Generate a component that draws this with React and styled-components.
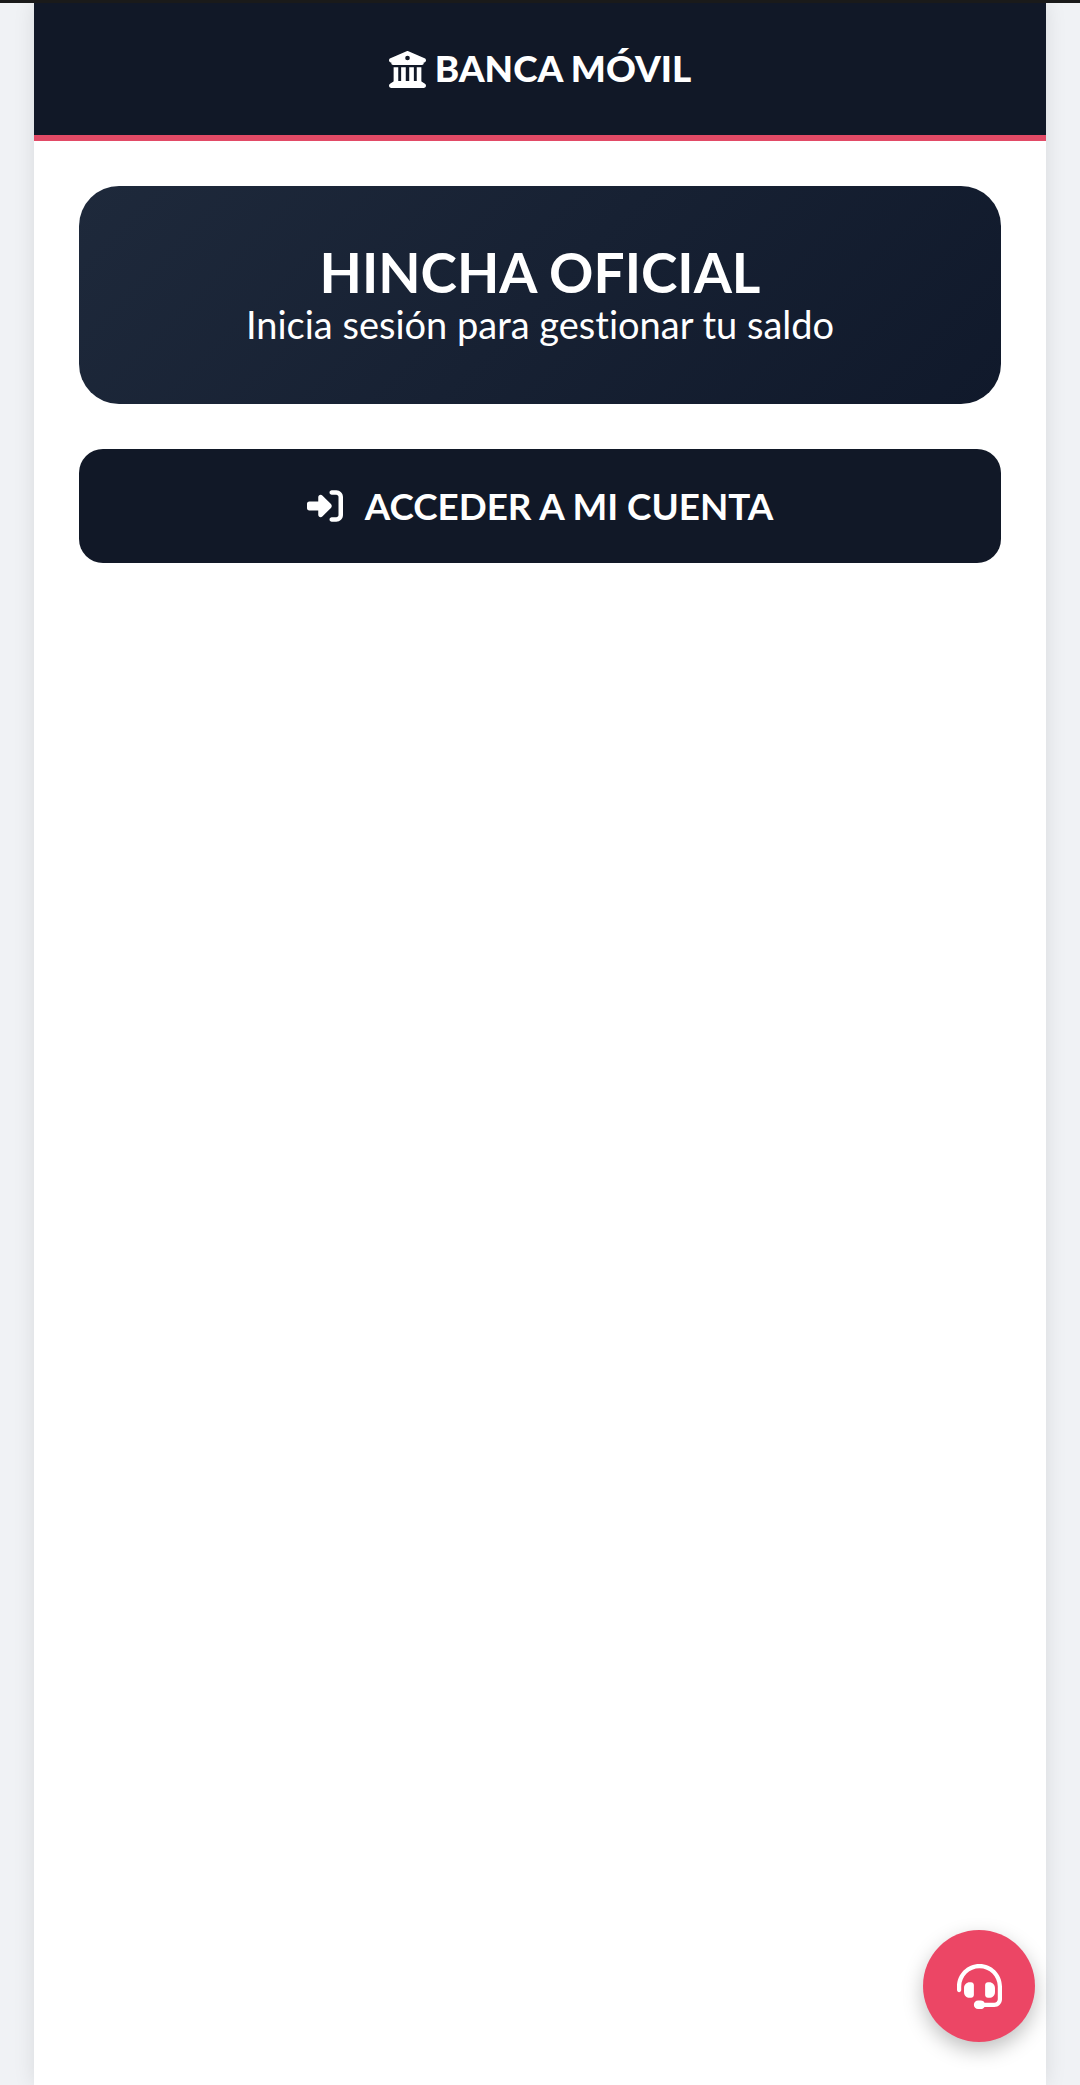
import React from "react";
import styled, { createGlobalStyle } from "styled-components";
import { FaBuildingColumns, FaRightToBracket, FaHeadset } from "react-icons/fa6";

const Global = createGlobalStyle`
  html, body { margin: 0; padding: 0; background: #f0f2f5; }
  body {
    font-family: "Lato", "Liberation Sans", sans-serif;
    font-variant-ligatures: none;
  }
`;

const Page = styled.div`
  min-height: 2085px;
  border-top: 3px solid #1a1a1a;
  box-sizing: border-box;
  overflow: hidden;
`;

const Shell = styled.main`
  width: 1012px;
  min-height: 2082px;
  margin: 0 auto;
  background: #fff;
  box-shadow: 0 0 20px rgba(0, 0, 0, 0.1);
`;

const Header = styled.header`
  height: 132px;
  box-sizing: content-box;
  background: #111827;
  border-bottom: 6px solid #e24a66;
  display: flex;
  align-items: center;
  justify-content: center;
  gap: 9px;
  color: #fff;
  font-size: 36.9px;
  font-weight: 900;
`;

const HeaderLabel = styled.span`
  line-height: 40px;
  margin-bottom: 2px;
`;

const Content = styled.div`
  padding: 45px;
  display: flex;
  flex-direction: column;
  gap: 45px;
`;

const Hero = styled.section`
  height: 218px;
  border-radius: 40px;
  background: linear-gradient(135deg, #1e293b, #10192b);
  color: #fff;
  display: flex;
  flex-direction: column;
  align-items: center;
  justify-content: center;
`;

const HeroTitle = styled.h1`
  margin: 0;
  font-size: 55px;
  line-height: 59px;
  font-weight: 700;
`;

const HeroSub = styled.p`
  margin: 0 0 1px;
  font-size: 38px;
  line-height: 44px;
  font-weight: 400;
`;

const LoginButton = styled.button`
  height: 114px;
  border: 0;
  border-radius: 24px;
  background: #111827;
  color: #fff;
  font: 700 36.8px "Lato", "Liberation Sans", sans-serif;
  font-variant-ligatures: none;
  display: flex;
  align-items: center;
  justify-content: center;
  gap: 22px;
`;

const HelpButton = styled.button`
  position: fixed;
  right: 45px;
  bottom: 43px;
  width: 112px;
  height: 112px;
  border: 0;
  border-radius: 50%;
  background: #ec4665;
  color: #fff;
  box-shadow: 0 8px 20px rgba(0, 0, 0, 0.25);
  display: flex;
  align-items: center;
  justify-content: center;
`;

export default function App() {
  return (
    <Page>
      <Global />
      <Shell>
        <Header>
          <FaBuildingColumns size={37} aria-hidden="true" />
          <HeaderLabel>BANCA MÓVIL</HeaderLabel>
        </Header>
        <Content>
          <Hero>
            <HeroTitle>HINCHA OFICIAL</HeroTitle>
            <HeroSub>Inicia sesión para gestionar tu saldo</HeroSub>
          </Hero>
          <LoginButton>
            <FaRightToBracket size={36} aria-hidden="true" />
            <span>ACCEDER A MI CUENTA</span>
          </LoginButton>
        </Content>
      </Shell>
      <HelpButton aria-label="Ayuda">
        <FaHeadset size={45} aria-hidden="true" />
      </HelpButton>
    </Page>
  );
}
